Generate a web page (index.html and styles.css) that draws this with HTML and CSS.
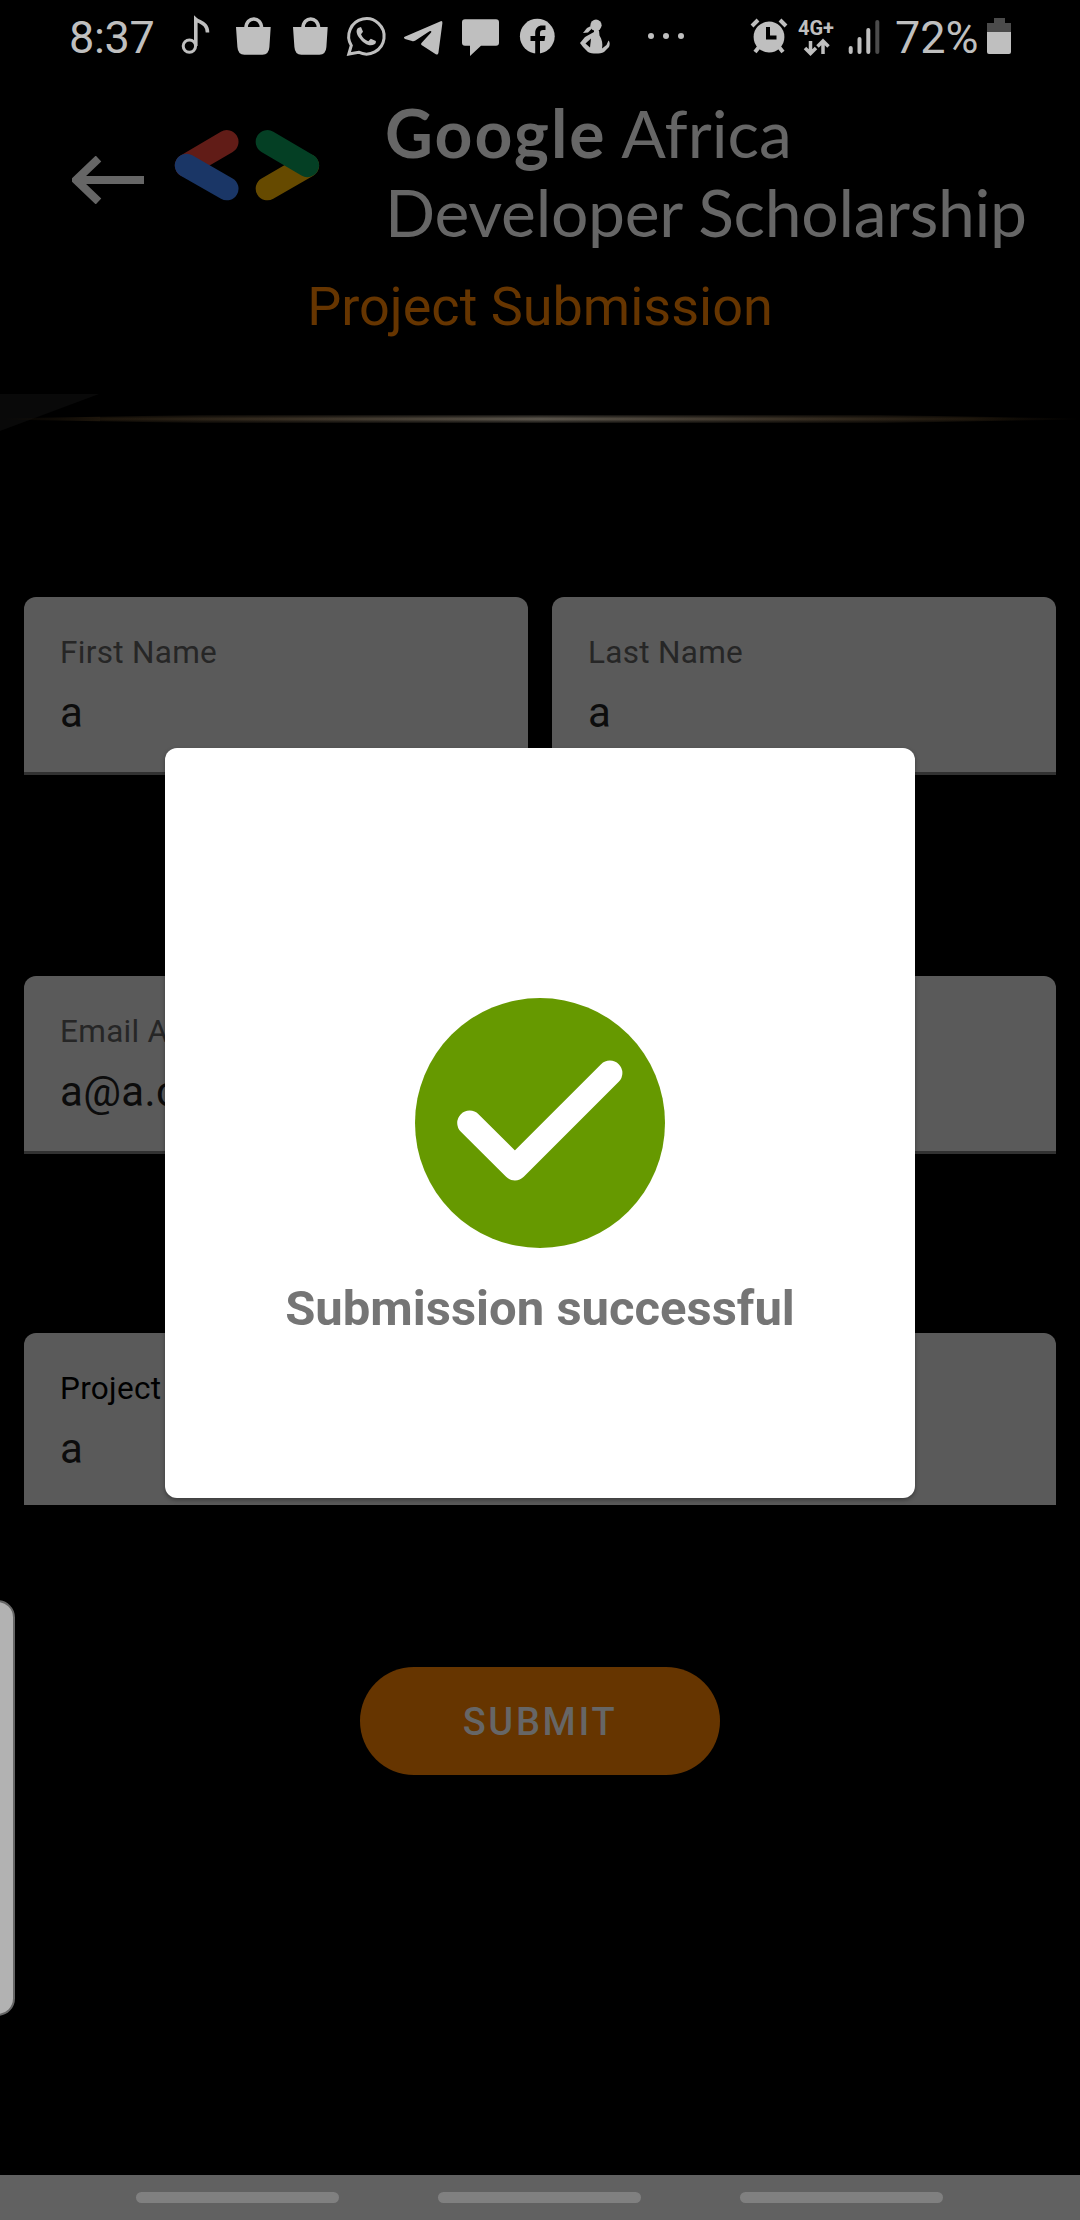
FILE: index.html
```html
<!DOCTYPE html>
<html lang="en">
<head>
<meta charset="utf-8">
<title>Project Submission</title>
<link rel="stylesheet" href="styles.css">
</head>
<body>
<div class="screen">
  <div class="status">
    <span class="clock">8:37</span>
    <div class="notifications">
      <svg viewBox="167 0 57 72"><g fill="none" stroke="#bfbfbf"><circle cx="189.4" cy="46.1" r="6.2" stroke-width="3"/><path d="M195.8 46V19.3c4 3.5 11.7 3.500 11.700 13.200" stroke-width="3.600"/></g></svg>
      <svg viewBox="224 0 57 72"><path d="M236 27h34.700l-1.300 20q-.5 7.700-7 7.700h-18q-6.500 0-7-7.700z"/><path d="M246 28c0-12 15.500-12 15.500 0" fill="none" stroke="#bfbfbf" stroke-width="3.500"/></svg>
      <svg viewBox="224 0 57 72"><path d="M236 27h34.700l-1.300 20q-.5 7.700-7 7.700h-18q-6.500 0-7-7.700z"/><path d="M246 28c0-12 15.500-12 15.500 0" fill="none" stroke="#bfbfbf" stroke-width="3.500"/></svg>
      <svg viewBox="338 0 57 72"><path d="M348.800 54l2.500-8.500a17.700 17.700 0 1 1 7.300 6.700z" fill="none" stroke="#bfbfbf" stroke-width="3"/><path d="M358 28c-2 2-2 5 1 9.500 5 7 11 9.300 15.500 6.800 1.300-.8 1.600-2 1.300-3.300l-5-2.300-2.500 2.500c-3.500-1.300-6-4-7.300-7l2-2.500-2-4.700z"/></svg>
      <svg viewBox="395 0 57 72"><path d="M404.700 36.800l36-15.600q1.900-.5 1.700 1.700l-4 30q-.5 2.500-2.600 1.300L421.500 45q-1-.8 0-2l9.600-10.500q1-2.200-1.600-1.200L415 40.700q-1.500.8-3 .3l-7-2q-2-1.200-.3-2.200z"/></svg>
      <svg viewBox="452 0 57 72"><path d="M465 19.300h31q3 0 3 3v20.400q0 3-3 3h-15L470 56V45.700h-5q-3 0-3-3V22.300q0-3 3-3z"/></svg>
      <svg viewBox="509 0 57 72"><circle cx="537.300" cy="36.200" r="17.400"/><path d="M535.200 54V41h-4.700v-5h4.700v-3c0-5 3-7.500 7-7.500h3.300v4.500h-2.500c-2 0-3 1-3 3v3h5.300l-.8 5H540v13z" fill="#000"/></svg>
      <svg viewBox="566 0 57 72"><circle cx="596" cy="25.200" r="5.600"/><path d="M591 26l-4 2-4 5 5-.5 4-4z"/><path d="M594 28v4l-9 5-5 6 3 4 5 5c4 2 12 2 16 0l5-5c1-2 1-5-.5-6.500l-2 4.500-4.500 3.500c1-5 0-9-2.500-13l-.5-5z"/><path d="M591 38.500l-5.500 5 4.500 4z" fill="#000"/></svg>
    </div>
    <svg class="more" viewBox="648 0 36 72"><circle cx="651" cy="36" r="3"/><circle cx="666" cy="36" r="3"/><circle cx="681" cy="36" r="3"/></svg>
    <svg class="alarm" viewBox="750 0 38 72"><circle cx="769" cy="37" r="15.400"/><path d="M752 26l6-6M786 26l-6-6M759 47l-4 5M779 47l4 5" stroke="#bfbfbf" stroke-width="4"/><path d="M768 27v10.500h8.500" fill="none" stroke="#000" stroke-width="4"/></svg>
    <div class="network"><span>4G+</span><svg viewBox="802 38 30 18"><path d="M810.500 41v12M805 48l5.500 5.500L816 48M823 54V42M817.500 46.500l5.500-5.500 5.500 5.500" fill="none" stroke="#bfbfbf" stroke-width="3.500"/></svg></div>
    <svg class="signal" viewBox="848 0 32 72"><g fill="none" stroke="#bfbfbf" stroke-width="4" stroke-linecap="round"><path d="M850.700 48v4M859.500 39v13M868.300 30v22"/><path d="M877.300 22v30" stroke="#4b4b4b"/></g></svg>
    <span class="percent">72%</span>
    <svg class="battery" viewBox="987 0 24 72"><path d="M987 32v-9h7v-5h11v5h6v9z" fill="#4b4b4b"/><path d="M987 32h24v20q0 2-2 2h-20q-2 0-2-2z"/></svg>
  </div>

  <header class="header">
    <svg class="back" viewBox="72 156 72 48"><path d="M98.500 158.500L76 180l22.500 21.500M76 180h68" fill="none" stroke="#666" stroke-width="8"/></svg>
    <svg class="logo" viewBox="174 129 146 72"><g stroke-width="23.400" stroke-linecap="round"><path d="M186.500 165.500l40.300-23.700" stroke="#611c17"/><path d="M186.500 165.500l40.300 23.100" stroke="#1a3666"/><path d="M267.400 188.600l40-23.100" stroke="#664a00"/><path d="M267.400 141.800l40 23.600" stroke="#043f24"/></g></svg>
    <h1 class="brand"><span class="line first"><b>Google</b> Africa</span><span class="line second">Developer Scholarship</span></h1>
  </header>
  <h2 class="subtitle">Project Submission</h2>
  <svg class="divider" viewBox="0 394 1080 38">
    <defs>
      <linearGradient id="glow"><stop offset="0" stop-color="#1a1208" stop-opacity="0"/><stop offset=".1" stop-color="#20180d"/><stop offset=".25" stop-color="#3a3023"/><stop offset=".5" stop-color="#625c52"/><stop offset=".75" stop-color="#3a3023"/><stop offset=".9" stop-color="#20180d"/><stop offset="1" stop-color="#1a1208" stop-opacity="0"/></linearGradient>
      <linearGradient id="edge" x2="0" y2="1"><stop offset="0" stop-color="#000"/><stop offset=".5" stop-color="#000" stop-opacity="0"/><stop offset="1" stop-color="#000"/></linearGradient>
    </defs>
    <path d="M0 394h99L0 431z" fill="#090909"/>
    <path d="M0 418.500L200 415h680l200 3.500v1L880 423H200L0 419.500z" fill="url(#glow)"/><path d="M100 414h980v10H100z" fill="url(#edge)"/>
  </svg>

  <main class="form">
    <div class="names">
      <div class="field"><label>First Name</label><span>a</span></div>
      <div class="field"><label>Last Name</label><span>a</span></div>
    </div>
    <div class="field email"><label>Email Address</label><span>a@a.com</span></div>
    <div class="field project"><label>Project Link</label><span>a</span></div>
    <button class="submit">SUBMIT</button>
  </main>

  <nav class="nav"><i></i><i></i><i></i></nav>

  <div class="edge-handle"></div>
  <div class="dialog">
    <svg viewBox="415 998 250 250"><circle cx="540" cy="1123" r="125" fill="#669900"/><path d="M469.700 1123l45.200 45 95-95" fill="none" stroke="#fff" stroke-width="25" stroke-linecap="round" stroke-linejoin="round"/></svg>
    <p>Submission successful</p>
  </div>
</div>
</body>
</html>
```
FILE: styles.css
```css
* { box-sizing: border-box; }
body { margin: 0; background: #000; font-family: Roboto, "Liberation Sans", sans-serif; }
h1, h2, p { margin: 0; }
svg { display: block; flex: none; }

.screen {
  position: relative;
  width: 1080px;
  height: 2220px;
  display: flex;
  flex-direction: column;
  background: #000;
  overflow: hidden;
}

/* status bar */
.status { height: 72px; display: flex; padding-left: 69px; color: #bfbfbf; flex: none; }
.status svg { height: 72px; fill: #bfbfbf; }
.clock, .percent { font-size: 45px; line-height: 75px; white-space: nowrap; }
.clock { width: 98px; letter-spacing: -.3px; }
.notifications { display: flex; }
.notifications svg { width: 57px; }
.more { width: 36px; margin-left: 25px; }
.alarm { width: 38px; margin-left: 66px; }
.network { width: 36px; margin-left: 10px; padding-top: 18px; font-size: 20px; font-weight: 700; line-height: 20px; }
.network span { display: block; }
.status .network svg { width: 30px; height: 18px; margin-left: 4px; }
.signal { width: 32px; margin-left: 14px; }
.percent { width: 92px; margin-left: 15px; }
.battery { width: 24px; }

/* header */
.header { display: flex; height: 190px; padding-left: 72px; flex: none; }
.back { width: 72px; height: 48px; margin-top: 84px; }
.logo { width: 146px; height: 72px; margin: 57px 0 0 30px; }
.brand { margin: 21px 0 0 65px; font: 400 66px/79px Lato, sans-serif; color: #666; white-space: nowrap; }
.line { display: block; }
.first { letter-spacing: 0; }
.first b { letter-spacing: 2px; }
.second { letter-spacing: -.3px; }
.subtitle { height: 64px; margin-top: 3px; flex: none; text-align: center; font-size: 54px; line-height: 84px; font-weight: 400; color: #663500; }
.divider { width: 1080px; height: 38px; margin-top: 65px; }

/* form */
.form { height: 1343px; padding: 165px 24px 0; display: flex; flex-direction: column; }
.names { display: flex; gap: 24px; }
.field {
  flex: none;
  height: 178px;
  padding: 37px 36px 0;
  display: flex;
  flex-direction: column;
  background: #5a5a5a;
  border-bottom: 3px solid #323232;
  border-radius: 12px 12px 0 0;
}
.names .field { flex: 1; }
.field label { font-size: 31.500px; line-height: 37px; letter-spacing: .3px; color: #262626; }
.field span { margin-top: 17px; font-size: 42px; line-height: 50px; letter-spacing: .4px; color: #0c0c0c; }
.email { margin-top: 201px; }
.project { margin-top: 179px; height: 172px; border-bottom: 0; }
.project label { color: #000; }
.submit {
  align-self: center;
  width: 360px;
  height: 108px;
  margin-top: 162px;
  padding: 2px 0 0;
  border: 0;
  border-radius: 54px;
  background: #663500;
  color: #666;
  font: 500 38px/106px Roboto, sans-serif;
  letter-spacing: 2.700px;
}

.nav { height: 45px; margin-top: auto; display: flex; gap: 99px; padding: 17px 0 0 136px; background: #616161; flex: none; }
.nav i { width: 203px; height: 11px; border-radius: 5.500px; background: #808080; }

/* overlays */
.edge-handle {
  position: absolute;
  left: -20px;
  top: 1600px;
  width: 35px;
  height: 416px;
  border: 2px solid #666;
  border-radius: 18px;
  background: #b2b2b2;
}
.dialog {
  position: absolute;
  left: 165px;
  top: 748px;
  width: 750px;
  height: 750px;
  padding-top: 250px;
  display: flex;
  flex-direction: column;
  align-items: center;
  border-radius: 12px;
  background: #fff;
  box-shadow: 0 2px 4px rgba(0, 0, 0, .35);
}
.dialog svg { width: 250px; height: 250px; }
.dialog p { margin-top: 32px; font-size: 49px; line-height: 58px; font-weight: 700; color: #757575; white-space: nowrap; }
```
